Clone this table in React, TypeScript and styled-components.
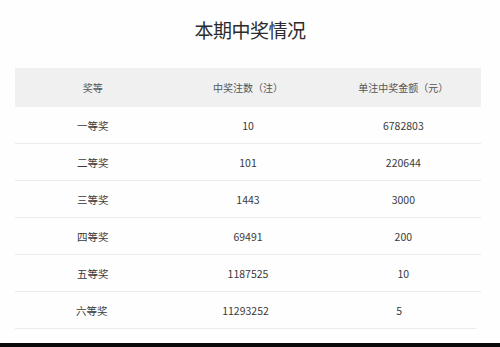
import styled, { createGlobalStyle } from "styled-components";

const GlobalStyle = createGlobalStyle`
  html, body {
    margin: 0;
    padding: 0;
    background: #fff;
    overflow: hidden;
  }
  body {
    font-family: "Noto Sans CJK SC", "Noto Sans", sans-serif;
  }
`;

const Page = styled.div`
  display: flex;
  flex-direction: column;
  height: 347px;
  background: #fefefe;
`;

const Title = styled.h1`
  margin: 20px 0 28px;
  font-size: 19px;
  line-height: 20px;
  font-weight: 400;
  color: #2b2b2b;
  text-align: center;
  letter-spacing: -0.5px;
`;

const Table = styled.div`
  margin: 0 19px 0 15px;
  display: flex;
  flex-direction: column;
`;

const HeaderRow = styled.div`
  display: grid;
  grid-template-columns: repeat(3, 1fr);
  align-items: center;
  height: 39px;
  background: #f0f0f0;
`;

const Row = styled.div<{ $last?: boolean }>`
  display: grid;
  grid-template-columns: repeat(3, 1fr);
  align-items: center;
  height: 36px;
  border-bottom: 1px solid #ebebeb;
  margin-right: ${(p) => (p.$last ? "5px" : "0")};
`;

const HeadCell = styled.div`
  text-align: center;
  font-size: 10px;
  color: #555;
`;

const Cell = styled.div`
  text-align: center;
  font-size: 10.5px;
  color: #3a3a3a;
`;

const BottomBar = styled.div`
  margin-top: auto;
  height: 4px;
  background: #0a0a0a;
`;

const prizes = [
  { level: "一等奖", count: "10", amount: "6782803" },
  { level: "二等奖", count: "101", amount: "220644" },
  { level: "三等奖", count: "1443", amount: "3000" },
  { level: "四等奖", count: "69491", amount: "200" },
  { level: "五等奖", count: "1187525", amount: "10" },
  { level: "六等奖", count: "11293252", amount: "5" },
];

export default function App() {
  return (
    <>
      <GlobalStyle />
      <Page>
        <Title>本期中奖情况</Title>
        <Table>
          <HeaderRow>
            <HeadCell>奖等</HeadCell>
            <HeadCell>中奖注数（注）</HeadCell>
            <HeadCell>单注中奖金额（元）</HeadCell>
          </HeaderRow>
          {prizes.map((p, i) => (
            <Row key={p.level} $last={i === prizes.length - 1}>
              <Cell>{p.level}</Cell>
              <Cell>{p.count}</Cell>
              <Cell>{p.amount}</Cell>
            </Row>
          ))}
        </Table>
        <BottomBar />
      </Page>
    </>
  );
}
